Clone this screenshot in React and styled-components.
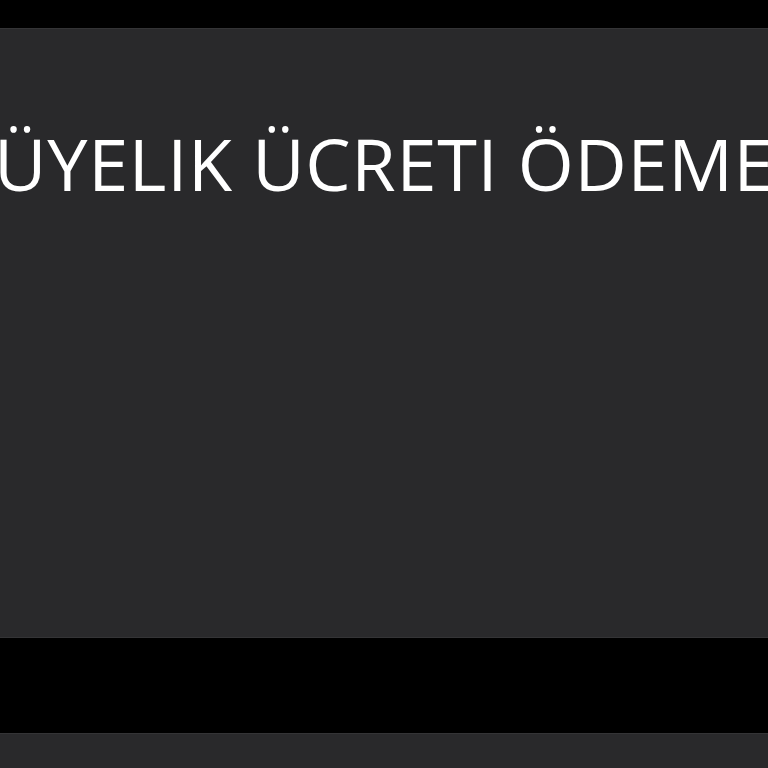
import React from "react";
import styled, { createGlobalStyle } from "styled-components";

const Global = createGlobalStyle`
  html, body { margin: 0; padding: 0; background: #000; }
  body { font-family: "Open Sans", "DejaVu Sans", sans-serif; }
`;

const Page = styled.div`
  width: 768px;
  height: 768px;
  display: flex;
  flex-direction: column;
  background: #000;
  overflow: hidden;
`;

const TopBar = styled.div`
  height: 28px;
  flex: none;
  background: #000;
`;

const Panel = styled.section`
  height: ${(p) => p.$h}px;
  flex: none;
  background: #29292b;
  border-top: 1px solid #343436;
  border-bottom: ${(p) => (p.$bottomLine ? "1px solid #343436" : "none")};
  overflow: hidden;
  box-sizing: border-box;
`;

const Title = styled.h1`
  margin: 84px 0 0 -6px;
  font-family: "Open Sans", "DejaVu Sans", sans-serif;
  font-weight: 400;
  font-size: 72px;
  line-height: 100px;
  color: #ffffff;
  white-space: nowrap;
  letter-spacing: 0.7px;
`;

const Gap = styled.div`
  height: 95px;
  flex: none;
  background: #000;
`;

export default function App() {
  return (
    <Page>
      <Global />
      <TopBar />
      <Panel $h={610} $bottomLine>
        <Title>ÜYELIK ÜCRETI ÖDEMESİ</Title>
      </Panel>
      <Gap />
      <Panel $h={35} />
    </Page>
  );
}
